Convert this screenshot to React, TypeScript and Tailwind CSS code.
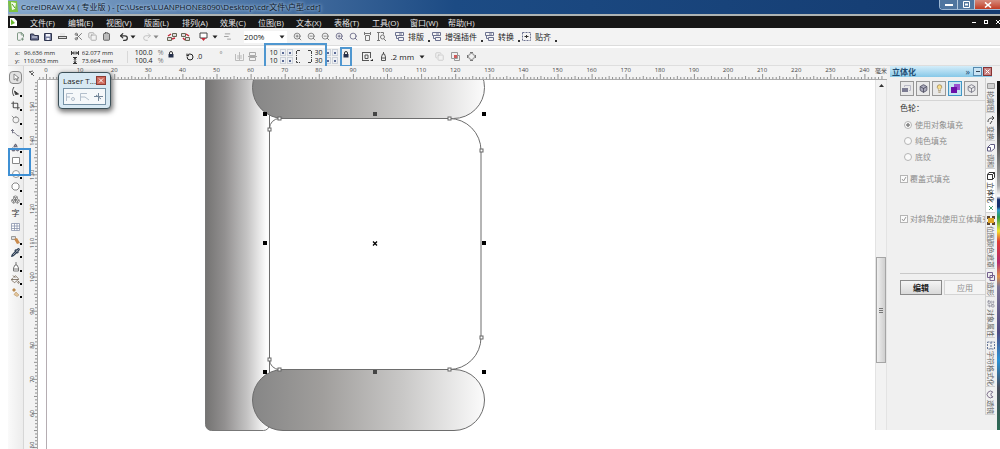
import type { ReactNode } from 'react';
import {
  Clipboard, Copy, FilePlus2, Lightbulb, Redo2,
  RotateCcw, Scissors, Search, Undo2, ZoomIn, ZoomOut, Moon, Boxes, Box,
  PaintBucket, Pipette, Shapes, Crop, Combine, ChartNoAxesGantt,
} from 'lucide-react';

function Btn({ label, children, className = 'w-3' }: { label: string; children: ReactNode; className?: string }) {
  return (
    <button aria-label={label} className={`flex h-3 shrink-0 items-center justify-center ${className}`}>
      {children}
    </button>
  );
}

function Caret({ color = '#222' }: { color?: string }) {
  return (
    <svg width="6" height="4" viewBox="0 0 6 4" className="shrink-0">
      <path d="M.5 .5h5L3 3.500z" fill={color} />
    </svg>
  );
}

function Padlock() {
  return (
    <svg width="6" height="7" viewBox="0 0 6 7" className="mb-1">
      <path d="M1.500 3V2q0-1.500 1.500-1.500T4.500 2v1" fill="none" stroke="#333" />
      <path d="M.5 3h5v3.500h-5z" fill="#26304a" />
    </svg>
  );
}

const menus = ['文件(F)', '编辑(E)', '视图(V)', '版面(L)', '排列(A)', '效果(C)', '位图(B)', '文本(X)', '表格(T)', '工具(O)', '窗口(W)', '帮助(H)'];

function TitleBar() {
  return (
    <header className="flex h-[14px] shrink-0 items-center overflow-hidden bg-linear-to-r from-[#86a8cc] via-[#1c4b84] via-45% to-[#143b70]">
      <svg width="11" height="12" viewBox="0 0 11 12" className="shrink-0">
        <path d="M0 0h9l1 11H1z" fill="#7dc242" />
        <path d="M3 1l5 1-1 6-3 1z" fill="#f4fbe9" />
        <path d="M4 3l3 4" stroke="#4d9a2a" />
      </svg>
      <h1 className="ml-[2px] whitespace-nowrap text-[8px] leading-[12px] text-[#0b1626] [text-shadow:0_0_3px_#b9d2ea,0_0_4px_#9dbcdc]">
        CorelDRAW X4 ( 专业版 ) - [C:\Users\LUANPHONE8090\Desktop\cdr文件\户型.cdr]
      </h1>
      <div className="ml-auto flex h-[10px] shrink-0 self-start overflow-hidden rounded-bl-sm border-b border-l border-[#9db8d4]">
        <button aria-label="最小化" className="flex w-[18px] items-center justify-center border-r border-[#b4c8dc] bg-[#4f759f]">
          <span className="h-[2px] w-2 bg-white" />
        </button>
        <button aria-label="还原" className="flex w-[17px] items-center justify-center border-r border-[#b4c8dc] bg-[#4f759f]">
          <svg width="9" height="7" viewBox="0 0 9 7"><path d="M1.500 .5h6v6h-6z" fill="none" stroke="#fff" /><path d="M3 2.500h3v2H3z" fill="#fff" /></svg>
        </button>
        <button aria-label="关闭" className="flex w-[25px] items-center justify-center bg-linear-to-b from-[#d58a7c] to-[#c03a22]">
          <svg width="8" height="6" viewBox="0 0 8 6"><path d="M1 .5l6 5M7 .5l-6 5" stroke="#fff" strokeWidth="1.6" /></svg>
        </button>
      </div>
    </header>
  );
}

function MenuBar() {
  return (
    <nav className="flex h-[14px] shrink-0 items-center border-t-2 border-[#aeb4b4] bg-[#171717] text-[8px] leading-[11px] text-[#e6e6e6]">
      <svg width="10" height="10" viewBox="0 0 10 10" className="shrink-0">
        <path d="M2 1h4l3 3v5H2z" fill="#fff" /><path d="M3 2l4 4-4 2z" fill="#6ab82e" />
      </svg>
      <div className="ml-3 flex gap-[11px]">
        {menus.map((m) => <button key={m} className="w-[27px] shrink-0 whitespace-nowrap text-left">{m}</button>)}
      </div>
      <div className="ml-auto flex shrink-0 items-center gap-2">
        <button aria-label="最小化文档" className="h-px w-1 bg-white" />
        <button aria-label="还原文档" className="size-1 border border-white" />
        <button aria-label="关闭文档" className="flex w-1 items-center">
          <svg width="4" height="4" viewBox="0 0 4 4"><path d="M0 0l4 4M4 0L0 4" stroke="#fff" /></svg>
        </button>
      </div>
    </nav>
  );
}

function DockIcon({ kind }: { kind: 'stack' | 'target' }) {
  return (
    <svg width="10" height="9" viewBox="0 0 10 9" className="shrink-0" fill="none" stroke="#6c7290">
      {kind === 'stack'
        ? <path d="M.5 .5h8v3h-8zM3.500 5.500h5v3h-5zM1.500 3.500v3h2M4 2h3" />
        : <><path d="M.5 .5h8v8h-8z" strokeDasharray="2 1" /><path d="M2.500 4.500h4M4.500 3v3" stroke="#333" /></>}
    </svg>
  );
}

function StandardBar() {
  return (
    <div className="flex h-[18px] shrink-0 items-center overflow-hidden border-b border-[#dcdcdc] bg-[#f3f3f3] pl-[6px] text-[8px] text-[#222]">
      <div className="flex gap-[2px]">
        <Btn label="新建"><FilePlus2 size={9} color="#5a7a60" /></Btn>
        <Btn label="打开">
          <svg width="9" height="8" viewBox="0 0 9 8"><path d="M.5 7V1h3l1 1.500h4V7z" fill="#6a7090" stroke="#2b3048" /><path d="M2 4h5" stroke="#dfe2ee" /></svg>
        </Btn>
        <Btn label="保存">
          <svg width="8" height="8" viewBox="0 0 8 8"><path d="M.5 .5h7v7h-7z" fill="#7880a0" stroke="#30364e" /><path d="M2 1h4v2.500H2zM2.500 5h3v2h-3z" fill="#f1f2f8" /></svg>
        </Btn>
        <Btn label="打印">
          <svg width="9" height="7" viewBox="0 0 9 7"><path d="M2 0h5v3H2z" fill="#e8e8e8" /><path d="M0 3h9v3H0z" fill="#555" /><path d="M1 4.500h7" stroke="#ddd" /></svg>
        </Btn>
      </div>
      <div className="ml-1 flex gap-[2px]">
        <Btn label="剪切"><Scissors size={9} color="#555" /></Btn>
        <Btn label="复制"><Copy size={9} color="#999" /></Btn>
        <Btn label="粘贴"><Clipboard size={9} color="#444" fill="#bbb" /></Btn>
      </div>
      <div className="ml-[6px] flex items-center">
        <Btn label="撤消"><Undo2 size={10} color="#333" strokeWidth={3} /></Btn>
        <Caret />
        <Btn label="重做" className="ml-[5px] w-3"><Redo2 size={10} color="#bbb" /></Btn>
        <Caret color="#888" />
      </div>
      <div className="ml-[6px] flex gap-[2px]">
        <Btn label="导入">
          <svg width="11" height="10" viewBox="0 0 11 10"><path d="M1.500 5.500h4v3h-4zM6.500 1.500h4v3h-4z" fill="#ddd" stroke="#665" /><path d="M2 4l3-2M6 7l3-1" stroke="#c32b3a" strokeWidth="1.500" /></svg>
        </Btn>
        <Btn label="导出">
          <svg width="11" height="10" viewBox="0 0 11 10"><path d="M5.500 5.500h4v3h-4zM1.500 1.500h4v3h-4z" fill="#ddd" stroke="#665" /><path d="M3 6l2 2M6 2l3 2" stroke="#c32b3a" strokeWidth="1.500" /></svg>
        </Btn>
      </div>
      <div className="ml-[6px] flex items-center gap-[3px]">
        <Btn label="应用程序启动器">
          <svg width="9" height="10" viewBox="0 0 9 10"><path d="M1 1h7v5H1z" fill="#fff" stroke="#444" /><path d="M2 6h5L4.500 9z" fill="#c32b3a" /></svg>
        </Btn>
        <Caret />
        <Btn label="欢迎屏幕"><ChartNoAxesGantt size={9} color="#888" /></Btn>
      </div>
      <label className="ml-[11px] flex h-3 items-center bg-white pr-[2px]">
        <select aria-label="缩放级别" className="w-[35px] appearance-none bg-transparent text-[8px] leading-[11px]"><option>200%</option></select>
        <Caret />
      </label>
      <div className="ml-1 flex gap-[2px] text-[#666]">
        <Btn label="放大"><ZoomIn size={9} /></Btn>
        <Btn label="缩小"><ZoomOut size={9} /></Btn>
        <Btn label="缩放选定范围"><ZoomOut size={9} /></Btn>
        <Btn label="缩放全部对象"><ZoomIn size={9} color="#555577" /></Btn>
        <Btn label="缩放页面"><Search size={9} color="#557" /></Btn>
        <Btn label="按页宽缩放"><svg width="9" height="9" viewBox="0 0 9 9" fill="none" stroke="#777"><path d="M1 1.500h7M1.500 0v3M7.500 0v3M2.500 3.500h4v5h-4z" /></svg></Btn>
        <Btn label="按页高缩放"><svg width="9" height="9" viewBox="0 0 9 9" fill="none" stroke="#777"><path d="M1.500 0v9M0 .5h3M0 8.500h3M3.500 .5h3v2" /><circle cx="5.500" cy="5" r="2" /><path d="M7 7l2 2" /></svg></Btn>
      </div>
      <div className="ml-2 flex shrink-0 items-center gap-2 whitespace-nowrap">
        {(['排版', '增强插件', '转换', '贴齐'] as const).map((t, i) => (
          <button key={t} className="flex items-center gap-[3px]">
            <DockIcon kind={i === 3 ? 'target' : 'stack'} />{t}
            <span className="-mr-[6px] ml-px mt-2 size-[2px] bg-[#333]" />
          </button>
        ))}
      </div>
    </div>
  );
}

function Field({ label, value, className }: { label: string; value: string; className: string }) {
  return <input aria-label={label} defaultValue={value} className={`h-2 bg-transparent leading-[8px] ${className}`} />;
}

function Spin() {
  return (
    <span className="flex gap-px">
      {[0, 1].map((k) => (
        <button key={k} aria-label={k ? '增大' : '减小'} className="flex h-[7px] w-[6px] items-center justify-center border border-[#cdd3da] bg-[#eef0f4]">
          <span className="size-[2px] bg-[#5a6a95]" />
        </button>
      ))}
    </span>
  );
}

function CornerPair({ a, b, n, flip }: { a: string; b: string; n: string; flip?: boolean }) {
  return (
    <div className="flex h-2 items-center">
      <Field label={`左侧圆角 ${n}`} value={a} className="w-[10px]" />
      <Spin />
      <svg width="16" height="7" viewBox="0 0 16 7" className="mx-[3px]" fill="none" stroke="#444" strokeDasharray="3 1">
        {flip ? <path d="M.5 0v5.500H4M12 5.500h3.500V0" /> : <path d="M4 1.500H.5V7M12 1.500h3.500V7" />}
      </svg>
      <Field label={`右侧圆角 ${n}`} value={b} className="w-[10px]" />
      <Spin />
    </div>
  );
}

function PropertyBar() {
  return (
    <div className="mt-[2px] flex h-[18px] shrink-0 items-center border-b border-[#dedede] bg-[#f1f1f1] pl-[7px] text-[7px] leading-[8px] text-[#222]">
      <div className="flex flex-col text-[6px]">
        <label className="flex">x:<Field label="x" value="96.636 mm" className="ml-1 w-[42px]" /></label>
        <label className="flex">y:<Field label="y" value="110.053 mm" className="ml-1 w-[42px]" /></label>
      </div>
      <div className="ml-[5px] flex flex-col text-[6px]">
        <label className="flex items-center gap-[3px]">
          <svg width="8" height="6" viewBox="0 0 8 6" stroke="#333" fill="none"><path d="M.5 1v4M7.500 1v4M1 3h6M3 1.500L1.500 3 3 4.500M5 1.500L6.500 3 5 4.500" /></svg>
          <Field label="宽度" value="62.077 mm" className="w-[38px]" />
        </label>
        <label className="flex items-center gap-[3px]">
          <svg width="8" height="7" viewBox="0 0 8 7" stroke="#333" fill="none"><path d="M2 .5h4M2 6.500h4M4 1v5M3 2.500L4 1l1 1.500M3 4.500L4 6l1-1.500" /></svg>
          <Field label="高度" value="73.664 mm" className="w-[38px]" />
        </label>
      </div>
      <span className="mx-[7px] h-3 w-px bg-[#d8d8d8]" />
      <div className="flex flex-col">
        <span className="flex"><Field label="水平比例" value="100.0" className="w-[23px]" /><span className="text-[#777]">%</span></span>
        <span className="flex"><Field label="垂直比例" value="100.4" className="w-[23px]" /><span className="text-[#777]">%</span></span>
      </div>
      <Btn label="不成比例的缩放" className="ml-[3px] w-2"><Padlock /></Btn>
      <label className="ml-[11px] flex items-center gap-[3px]"><RotateCcw size={8} strokeWidth={3} /><Field label="旋转角度" value=".0" className="w-[23px]" /></label>
      <span className="-mt-1 text-[#777]">°</span>
      <div className="ml-3 flex gap-[3px] text-[#aaa]">
        <Btn label="水平镜像" className="w-[10px]"><svg width="9" height="9" viewBox="0 0 9 9" fill="none" stroke="#bbb"><path d="M.5 2v6.500h8V2M3 3v4M6 3v4M4.500 0v9" /></svg></Btn>
        <Btn label="垂直镜像" className="w-[10px]"><svg width="9" height="9" viewBox="0 0 9 9" fill="none" stroke="#aaa"><path d="M1.500 .5h6v3h-6zM1.500 5.500h6v3h-6zM0 4.500h9" /></svg></Btn>
      </div>
      <div className="relative ml-3">
        <div className="flex flex-col">
          <CornerPair a="10" b="30" n="上" />
          <CornerPair a="10" b="30" n="下" flip />
        </div>
        <span className="pointer-events-none absolute -left-[6px] -top-[6px] h-7 w-[63px] border-2 border-[#4f97d0]" />
      </div>
      <div className="relative ml-1">
        <Btn label="全部圆角" className="w-2"><Padlock /></Btn>
        <span className="pointer-events-none absolute -left-[2px] -top-1 h-5 w-3 border-2 border-[#4f97d0]" />
      </div>
      <Btn label="段落文本换行" className="ml-3 w-3">
        <svg width="11" height="10" viewBox="0 0 11 10" fill="none" stroke="#555"><path d="M0 .5h9M0 8.500h7M.5 0v9M8.500 0v6M3 3h3v3.500H3z" /><path d="M8 9h3V7z" fill="#222" stroke="none" /></svg>
      </Btn>
      <label className="ml-[6px] flex items-center gap-1">
        <svg width="7" height="9" viewBox="0 0 7 9" fill="none" stroke="#555"><path d="M3.500 0v2M2.500 2h2l1 3v3.500h-4V5zM1 6h5" /></svg>
        <select aria-label="轮廓宽度" className="w-6 appearance-none bg-transparent text-[8px] leading-[10px]"><option>.2 mm</option></select>
        <Caret />
      </label>
      <div className="ml-[9px] flex gap-1">
        <Btn label="到图层前面"><Copy size={9} color="#c4c4c4" /></Btn>
        <Btn label="到图层后面"><svg width="9" height="9" viewBox="0 0 9 9"><path d="M.5 .5h6v6h-6zM3.500 3.500h5v5h-5z" fill="none" stroke="#999" /><path d="M3 3h3v3H3z" fill="#d05c5c" /></svg></Btn>
        <Btn label="转换为曲线"><svg width="9" height="9" viewBox="0 0 9 9" fill="none" stroke="#888"><circle cx="4.500" cy="4.500" r="3" /><path d="M3 .5h3M3 8.500h3M.5 3v3M8.500 3v3" stroke="#777" /></svg></Btn>
      </div>
    </div>
  );
}

function Tool({ label, children, flyout = true, active = false }: { label: string; children: ReactNode; flyout?: boolean; active?: boolean }) {
  return (
    <button aria-label={label} className={`relative flex h-[13px] w-[13px] shrink-0 items-center justify-center text-[#555] ${active ? 'rounded-sm border border-[#888] bg-[#e2e2e2]' : ''}`}>
      {children}
      {flyout && <span className="absolute bottom-px right-0 size-[2px] bg-black" />}
    </button>
  );
}

function Toolbox() {
  return (
    <aside className="flex w-4 shrink-0 flex-col items-center border-r border-[#d6d6d6] bg-linear-to-r from-[#fafafa] to-[#ececec] pt-[5px]">
      <div className="flex flex-col gap-px">
        <Tool label="挑选" active flyout={false}><svg width="8" height="9" viewBox="0 0 8 9"><path d="M2 1v6l2-1.500L5 8l1-.5L5 5h2z" fill="#fff" stroke="#888" /></svg></Tool>
        <Tool label="形状"><svg width="9" height="10" viewBox="0 0 9 10" fill="none" stroke="#444"><path d="M3 0C1 3 1 6 3 9" /><path d="M3.500 4l4 3-3 .5z" fill="#333" /></svg></Tool>
        <Tool label="裁剪"><Crop size={9} strokeWidth={3} /></Tool>
        <Tool label="缩放"><Search size={9} className="-scale-x-100 rotate-90" color="#777" /></Tool>
        <Tool label="手绘"><svg width="9" height="9" viewBox="0 0 9 9" fill="none" stroke="#778"><path d="M1.500 0v4c3-2 3 3 7 3M0 1.500h3" /></svg></Tool>
        <Tool label="智能填充"><Shapes size={9} color="#445" fill="#99a" /></Tool>
      </div>
      <div className="relative flex flex-col">
        <Tool label="矩形"><svg width="8" height="7" viewBox="0 0 8 7"><path d="M.5 .5h7v6h-7z" fill="#fff" stroke="#888" /></svg></Tool>
        <Tool label="椭圆形"><svg width="8" height="8" viewBox="0 0 8 8"><circle cx="4" cy="4" r="3.500" fill="#fff" stroke="#999" /></svg></Tool>
        <span className="pointer-events-none absolute -left-[1px] -top-[6px] z-10 h-7 w-[23px] border-2 border-[#3f90d4]" />
      </div>
      <Tool label="多边形"><svg width="9" height="9" viewBox="0 0 9 9"><path d="M3 1h3l2 2v3L6 8H3L1 6V3z" fill="#fff" stroke="#888" /></svg></Tool>
      <Tool label="基本形状"><Boxes size={9} color="#777" /></Tool>
      <Tool label="文本" flyout={false}><span className="text-[8px] leading-none text-[#333]">字</span></Tool>
      <div className="mt-px flex flex-col">
        <Tool label="表格" flyout={false}><svg width="9" height="8" viewBox="0 0 9 8"><path d="M.5 .5h8v7h-8zM.5 3h8M.5 5.500h8M3.500 .5v7M6 .5v7" fill="#fff" stroke="#8c95ad" strokeWidth=".8" /></svg></Tool>
        <Tool label="交互式调和"><svg width="10" height="10" viewBox="0 0 10 10"><path d="M.5 1.500h4v3h-4z" fill="#ddd" stroke="#999" /><path d="M3 4l3-1 3 5-3 1z" fill="#c98a4c" /></svg></Tool>
        <Tool label="滴管"><Pipette size={9} color="#26384f" strokeWidth={3} /></Tool>
      </div>
      <div className="mt-px flex flex-col">
        <Tool label="轮廓"><svg width="8" height="10" viewBox="0 0 8 10" fill="#fff" stroke="#777"><path d="M4 0v3M3 3h2l1.500 3v3h-5V6zM2 7h4" /></svg></Tool>
        <Tool label="填充"><PaintBucket size={9} color="#665544" /></Tool>
        <Tool label="交互式填充"><svg width="10" height="10" viewBox="0 0 10 10"><path d="M3 0l2 2-2 2-2-2z" fill="#b98a50" /><path d="M5 4l3 3-2 1.500-3-2z" fill="#e5c79c" stroke="#b59468" strokeWidth=".6" /></svg></Tool>
      </div>
    </aside>
  );
}

const mmTicks = Array.from({ length: 248 }, (_, i) => i - 2);
const tens = Array.from({ length: 25 }, (_, i) => i * 10);

function HorizontalRuler() {
  return (
    <svg height="14" viewBox="38 66 849 14" width="849" className="block shrink-0 text-[6px]" fill="#444">
      <path d={mmTicks.map((m) => `M${46.5 + m * 3.41} 79v-${m % 10 === 0 ? 5 : m % 5 === 0 ? 3 : 2}`).join('')} stroke="#777" strokeWidth=".8" />
      <path d="M38 79.500h849" stroke="#aaa" />
      {tens.map((t) => <text key={t} x={46 + t * 3.41} y="72" textAnchor="middle">{t}</text>)}
      <text x="875" y="73">毫米</text>
    </svg>
  );
}

function VerticalRuler() {
  const ticks = Array.from({ length: 109 }, (_, i) => 158 - i);
  return (
    <svg width="14" height="369" viewBox="24 80 14 369" className="block shrink-0 bg-[#f3f3f3] text-[6px]" fill="#444">
      <path d={ticks.map((m) => `M37 ${243 + (110 - m) * 3.41}h-${m % 10 === 0 ? 5 : m % 5 === 0 ? 3 : 2}`).join('')} stroke="#777" strokeWidth=".8" />
      <path d="M37.500 80v369" stroke="#aaa" />
      {[150, 140, 130, 120, 110, 100, 90, 80, 70, 60, 50].map((t) => (
        <text key={t} textAnchor="middle" transform={`translate(34 ${t === 50 ? 445 : 243 + (110 - t) * 3.41}) rotate(-90)`}>{t}</text>
      ))}
    </svg>
  );
}

const handles = [[265, 114], [375, 114], [484, 114], [265, 243], [484, 243], [265, 372], [375, 372], [484, 372]];
const nodes = [[269, 129], [279, 118], [449, 118], [481, 150], [481, 337], [449, 369], [279, 369], [269, 359]];

function Drawing() {
  return (
    <svg width="838" height="369" viewBox="38 80 838 369" className="block shrink-0">
      <defs>
        <linearGradient id="bar"><stop offset="0" stopColor="#747372" /><stop offset=".3" stopColor="#929090" /><stop offset=".65" stopColor="#c4c3c3" /><stop offset=".95" stopColor="#fcfcfc" /></linearGradient>
        <linearGradient id="pill"><stop offset="0" stopColor="#868686" /><stop offset=".3" stopColor="#a09e9c" /><stop offset=".65" stopColor="#c9c8c7" /><stop offset="1" stopColor="#fbfbfb" /></linearGradient>
      </defs>
      <path d="M46.500 80v369" stroke="#b5adb2" />
      <rect x="205.500" y="60" width="64" height="370.500" rx="6" fill="url(#bar)" stroke="#777" />
      <g stroke="#6d6d6d">
        <rect x="252.500" y="56.500" width="232" height="62" rx="31" fill="url(#pill)" />
        <rect x="252.500" y="369.500" width="232" height="61" rx="30.500" fill="url(#pill)" />
        <path d="M279.500 118.500H449a32 32 0 0 1 32 32V337.500a32 32 0 0 1-32 32H279.500a10 10 0 0 1-10-10V128.500a10 10 0 0 1 10-10z" fill="#fff" />
        <path d="M269.500 115v14M269.500 359v14" />
      </g>
      {handles.map(([x, y]) => <rect key={`${x}-${y}`} x={x - 2} y={y - 2} width="4" height="4" fill={x === 375 ? '#444' : '#000'} />)}
      {nodes.map(([x, y]) => <rect key={`${x}-${y}`} x={x - 1} y={y - 1} width="3" height="3" fill="#fff" stroke="#666" />)}
      <path d="M373 241.500l4 4M377 241.500l-4 4" stroke="#000" strokeWidth="1.300" />
    </svg>
  );
}

function LaserPanel() {
  return (
    <section className="absolute left-[34px] top-[6px] z-10 w-[53px] rounded-sm border border-[#3c5058] bg-[#d8e9f3] px-1 pb-[3px] shadow-[1px_2px_5px_1px_#777]">
      <h2 className="flex h-[15px] items-center justify-between whitespace-nowrap text-[8px] text-[#222]">
        Laser T...
        <button aria-label="关闭" className="flex h-[9px] w-[10px] shrink-0 items-center justify-center border border-[#8c3d35] bg-[#cf6a5c]">
          <svg width="6" height="5" viewBox="0 0 6 5"><path d="M1 .5l4 4M5 .5l-4 4" stroke="#fff" /></svg>
        </button>
      </h2>
      <div className="flex h-[17px] items-center justify-around border border-[#7591a5] bg-[#f5f8fa]">
        <button aria-label="工具一"><svg width="11" height="10" viewBox="0 0 11 10" fill="none" stroke="#b3bfcc"><path d="M1.500 9V1.500H8M1.500 5H5" /><circle cx="8" cy="7" r="1.500" /></svg></button>
        <button aria-label="工具二"><svg width="11" height="10" viewBox="0 0 11 10" fill="none" stroke="#b3bfcc"><path d="M1.500 9V1.500H8M1.500 5H6l4 3" /></svg></button>
        <button aria-label="工具三"><svg width="11" height="10" viewBox="0 0 11 10" fill="none" stroke="#74879a"><path d="M5.500 1v8M1 4.500h9M3 3l5 4" /></svg></button>
      </div>
    </section>
  );
}

function ScrollBar() {
  return (
    <div className="flex h-[350px] w-3 shrink-0 flex-col items-center border-x border-[#e3e3e3] bg-[#f2f2f2] pt-1">
      <svg width="5" height="3" viewBox="0 0 5 3"><path d="M0 3l2.500-3L5 3z" fill="#333" /></svg>
      <span className="mt-[170px] flex h-[106px] w-[10px] flex-col items-center justify-center gap-px border border-[#a5a5a5] bg-linear-to-r from-[#efefef] to-[#cfcfcf]">
        <i className="h-px w-1 bg-[#777]" /><i className="h-px w-1 bg-[#777]" /><i className="h-px w-1 bg-[#777]" />
      </span>
    </div>
  );
}

function Radio({ label, checked }: { label: string; checked?: boolean }) {
  return (
    <label className="flex h-4 items-center gap-[3px]">
      <input type="radio" name="fill" defaultChecked={checked} className="size-2 appearance-none rounded-full border border-[#b5b5b5] bg-[#fafafa] checked:bg-[radial-gradient(#888_35%,#fafafa_45%)]" />
      {label}
    </label>
  );
}

function Check({ label }: { label: string }) {
  return (
    <label className="flex h-3 items-center gap-[2px] overflow-hidden whitespace-nowrap">
      <span className="relative flex size-2 shrink-0">
        <input type="checkbox" defaultChecked className="size-2 appearance-none border border-[#b5b5b5] bg-[#fafafa]" />
        <svg width="8" height="8" viewBox="0 0 8 8" className="pointer-events-none absolute inset-0" fill="none" stroke="#999"><path d="M2 4l1.500 2L6 2" /></svg>
      </span>
      {label}
    </label>
  );
}

const tabs: { name: string; active?: boolean; icon: ReactNode }[] = [
  { name: '轮廓图', icon: <svg width="8" height="9" viewBox="0 0 8 9"><path d="M.5 2.500h7v5h-7z" fill="#d0d0d0" stroke="#999" /></svg> },
  { name: '变换', icon: <svg width="8" height="9" viewBox="0 0 8 9" fill="none" stroke="#444"><path d="M1 6c0-4 3-4 6-4M5 0l2 2-2 2M3 8l2-3" /></svg> },
  { name: '调和', icon: <svg width="8" height="9" viewBox="0 0 8 9" fill="#fff" stroke="#5e5a80"><path d="M3.500 .5h4v4l-3 2.500h-4V3.500zM.5 3.500h3v3" /></svg> },
  { name: '立体化', active: true, icon: <svg width="8" height="9" viewBox="0 0 8 9" fill="#fff" stroke="#333"><path d="M.5 2.500h5v5h-5zM.5 2.500L2 .5h5.500v5l-2 2M5.500 2.500l2-2" /></svg> },
  { name: '位图颜色遮罩', icon: <svg width="8" height="9" viewBox="0 0 8 9"><path d="M0 0h3v3H0zM5 0h3v3H5zM0 6h3v3H0zM5 6h3v3H5z" fill="#5c4630" /><path d="M1 2h6v5H1z" fill="#e0a526" /></svg> },
  { name: '造形', icon: <svg width="8" height="9" viewBox="0 0 8 9" fill="none" stroke="#74608e"><path d="M.5 .5h5v5h-5zM3 3.500h4.500v5H3z" /></svg> },
  { name: '对象属性', icon: <Combine size={8} color="#778" /> },
  { name: '字符格式化', icon: <svg width="8" height="9" viewBox="0 0 8 9" fill="none" stroke="#667799" strokeDasharray="2 1"><path d="M.5 1h7v7h-7zM4 1v7" /></svg> },
  { name: '透镜', icon: <Moon size={9} color="#665577" className="rotate-45" /> },
];

const wells = [
  { n: '照相机', i: <svg width="10" height="9" viewBox="0 0 10 9"><path d="M0 4h6v4H0z" fill="#7c7c92" /><path d="M2.500 3V1.500h6v5H7" fill="none" stroke="#b8b8c4" /></svg> },
  { n: '旋转', i: <Box size={9} color="#445" fill="#aab" /> },
  { n: '光源', i: <Lightbulb size={9} color="#998050" fill="#f7dd8a" /> },
  { n: '颜色', i: <svg width="9" height="9" viewBox="0 0 9 9"><path d="M0 3h6v6H0z" fill="#6b0fa8" /><path d="M3 0h6v6H6V3H3z" fill="#9b52d0" /></svg> },
  { n: '斜角', i: <Box size={9} color="#667" /> },
];

function Docker() {
  return (
    <aside className="flex h-[364px] w-[113px] shrink-0 flex-col bg-[#f0f0f0] text-[8px] text-[#8d8d8d]">
      <div className="ml-[3px] mr-2 flex h-[11px] items-center bg-linear-to-b from-[#d4edf9] to-[#86c8e8] pl-[2px] leading-[11px] text-[#1f4d73]">
        <h2 className="text-[8px] font-bold">立体化</h2>
        <button aria-label="折叠" className="ml-auto mr-[3px] flex items-center text-[9px] leading-none">»</button>
        <button aria-label="卷起" className="mr-px flex h-[9px] w-[9px] items-center justify-center border border-[#5689ae] bg-[#c9e3f3]"><i className="h-px w-1 bg-[#345]" /></button>
        <button aria-label="关闭" className="flex h-[9px] w-[9px] items-center justify-center border border-[#833] bg-[#c98484]">
          <svg width="5" height="5" viewBox="0 0 5 5"><path d="M.5 .5l4 4M4.500 .5l-4 4" stroke="#fff" /></svg>
        </button>
      </div>
      <div className="flex grow">
        <div className="flex min-w-0 flex-1 flex-col overflow-hidden pl-[13px]">
          <div className="mt-1 flex gap-[2px]">
            {wells.map((w) => (
              <button key={w.n} aria-label={w.n} className={`flex h-[15px] w-[14px] items-center justify-center border ${w.n === '颜色' ? 'border-[#4296c5] bg-[#c5e4f2]' : 'border-[#979797] bg-[#e9e9e9]'}`}>{w.i}</button>
            ))}
          </div>
          <h3 className="mt-1 border-t border-[#d5d5d5] pt-[2px] leading-[10px] text-[#333]">色轮：</h3>
          <div className="mt-1 pl-1">
            <Radio label="使用对象填充" checked /><Radio label="纯色填充" /><Radio label="底纹" />
          </div>
          <div className="mt-2"><Check label="覆盖式填充" /></div>
          <div className="mt-7"><Check label="对斜角边使用立体填充" /></div>
          <div className="mt-12 flex gap-[2px] border-t border-[#c9c9c9] pt-[6px]">
            <button className="h-[15px] w-[42px] shrink-0 border border-[#8a8a8a] bg-linear-to-b from-[#f4f4f4] to-[#d9d9d9] font-bold text-[#222]">编辑</button>
            <button className="h-[15px] w-[42px] shrink-0 border border-[#d4d4d4] bg-[#f4f4f4]">应用</button>
          </div>
        </div>
        <div className="flex w-[10px] shrink-0 flex-col pt-px text-[7px] leading-[9px] text-[#666]">
          {tabs.map((t) => (
            <button key={t.name} className={`flex shrink-0 flex-col items-center gap-px border-b border-l border-[#d2d2d2] pt-[3px] ${t.active ? 'bg-white text-[#222]' : ''}`}>
              {t.icon}
              <span className="[text-orientation:sideways] [writing-mode:vertical-rl]">{t.name}</span>
              {t.active && <svg width="6" height="8" viewBox="0 0 6 8" stroke="#4b9c70"><path d="M1 2l4 4M5 2L1 6" /></svg>}
            </button>
          ))}
        </div>
        <div className="ml-[2px] mt-1 h-[349px] w-[3px] shrink-0 bg-[linear-gradient(to_bottom,#111_0_8%,#555_18%,#aaa_30%,#fff_33%,#16306e_34%_36%,#2f9ac9_37%,#2a9b4b_39%,#f2e32d_43%,#df3b34_46%,#b52b6c_52%,#e0934b_56%,#7a7194_59%,#4d4a80_72%,#2c93d6_80%,#454a58_88%,#2c6b55)]" />
      </div>
    </aside>
  );
}

export default function App() {
  return (
    <div className="flex min-h-screen flex-col overflow-hidden bg-white pl-2 font-['Open_Sans','Noto_Sans_CJK_SC',sans-serif]">
      <TitleBar />
      <MenuBar />
      <StandardBar />
      <PropertyBar />
      <main className="flex flex-1">
        <Toolbox />
        <div className="relative flex min-w-0 flex-1 flex-col overflow-hidden">
          <div className="flex h-[14px] shrink-0 bg-[#f3f3f3]">
            <svg width="14" height="14" viewBox="0 0 14 14" className="shrink-0" stroke="#666" fill="none"><path d="M5 5l5 5M9 5L5 6M7 9l3-3" /></svg>
            <HorizontalRuler />
          </div>
          <div className="flex">
            <VerticalRuler />
            <div className="min-w-0 flex-1 overflow-hidden bg-white"><Drawing /></div>
            <ScrollBar />
          </div>
          <LaserPanel />
        </div>
        <Docker />
      </main>
    </div>
  );
}
